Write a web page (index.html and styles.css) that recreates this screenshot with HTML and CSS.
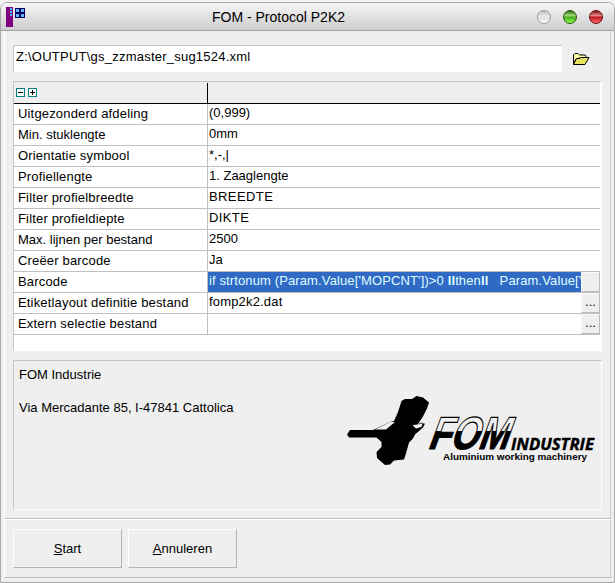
FILE: index.html
```html
<!DOCTYPE html>
<html lang="nl">
<head>
<meta charset="utf-8">
<title>FOM - Protocol P2K2</title>
<link rel="stylesheet" href="styles.css">
</head>
<body>
<div class="window">
  <header class="titlebar">
    <svg class="app-icon" width="20" height="21" viewBox="0 0 20 21" shape-rendering="crispEdges"><path fill="#800080" d="M0 0h7v20H0z"/><path fill="#4ac4ff" d="M4 1h2v2H4zm0 3h2v2H4zm0 3h2v2H4z"/><path fill="#000060" d="M9 1h10v10H9z"/><path fill="#64b9f4" d="M10 2h3v3h-3zm5 0h3v3h-3zm-5 5h3v3h-3zm5 0h3v3h-3z"/></svg>
    <h1>FOM - Protocol P2K2</h1>
    <div class="orbs"><i class="orb gray"></i><i class="orb green"></i><i class="orb red"></i></div>
  </header>
  <main>
    <div class="file-row">
      <div class="file-field">Z:\OUTPUT\gs_zzmaster_sug1524.xml</div>
      <svg class="folder" width="18" height="13" viewBox="0 0 18 13"><path d="M1.500 11.500V2L3 .5h3L7.500 2h5.500L14 3v2H7L3.500 6.500 1.500 11.500z" fill="#ffffa0" stroke="#000"/><path d="M1.500 11.500 4.500 5.500H8l1-1h8l-4 7z" fill="#e9e060" stroke="#000"/></svg>
    </div>
    <section class="grid">
      <div class="grid-head">
        <div class="label"><svg width="22" height="9" viewBox="0 0 22 9" shape-rendering="crispEdges"><path fill="#fff" stroke="#008080" d="M.5.5h8v8h-8zM12.500.5h8v8h-8z"/><path stroke="#000" d="M2 4.500h5M14 4.500h5M16.500 2v5"/></svg></div>
        <div class="value"></div>
      </div>
      <div class="row"><div class="label wide">Uitgezonderd afdeling</div><div class="value">(0,999)</div></div>
      <div class="row"><div class="label">Min. stuklengte</div><div class="value">0mm</div></div>
      <div class="row"><div class="label wide">Orientatie symbool</div><div class="value">*,-,|</div></div>
      <div class="row"><div class="label wide">Profiellengte</div><div class="value">1. Zaaglengte</div></div>
      <div class="row"><div class="label wide">Filter profielbreedte</div><div class="value caps">BREEDTE</div></div>
      <div class="row"><div class="label wide">Filter profieldiepte</div><div class="value caps">DIKTE</div></div>
      <div class="row"><div class="label">Max. lijnen per bestand</div><div class="value">2500</div></div>
      <div class="row"><div class="label wide">Creëer barcode</div><div class="value">Ja</div></div>
      <div class="row"><div class="label wide">Barcode</div><div class="value selected">if strtonum (Param.Value['MOPCNT'])&gt;0 <b>ll</b>then<b>ll</b>   Param.Value['</div><div class="more"></div></div>
      <div class="row"><div class="label wide">Etiketlayout definitie bestand</div><div class="value wide">fomp2k2.dat</div><div class="more">...</div></div>
      <div class="row"><div class="label wide">Extern selectie bestand</div><div class="value"></div><div class="more">...</div></div>
    </section>
    <section class="panel">
      <div class="address"><p>FOM Industrie</p><p>Via Mercadante 85, I-47841 Cattolica</p></div>
      <svg class="logo" width="250" height="74" viewBox="345 393 250 74">
        <defs><linearGradient id="split" x1="0" y1="416" x2="0" y2="450" gradientUnits="userSpaceOnUse"><stop offset="0" stop-color="#f0f0f0"/><stop offset=".45" stop-color="#f0f0f0"/><stop offset=".45"/><stop offset="1"/></linearGradient></defs>
        <path d="M401.500 401 405 399l7 0 4.500-3 6.500 1.500 6 5-2 6-4 8-4 6-2 2 8-1-2 4-8 7-2 4-4 4-3 11-2 6-10 1-4 4-5 .500-8-7-.500-6 5-5v-5l-5-4.500H349l-2-3 3-4.500h23l17-8 4-1 4-9z"/>
        <path d="M375 429.500l15-7.500h5l-9 7.500z" fill="#f0f0f0"/><path d="M412 425l11-2-1 4-6 2z" fill="#f0f0f0" stroke="#000" stroke-width=".7"/>
        <g transform="translate(428 449.500) skewX(-20) translate(-428 -449.500)">
          <text class="fom" x="427" y="449.500" textLength="80" lengthAdjust="spacingAndGlyphs" fill="url(#split)" stroke="#000" stroke-width="1.200">FOM</text>
        </g>
        <text class="industrie" x="511" y="449.500" textLength="83" lengthAdjust="spacingAndGlyphs">INDUSTRIE</text>
        <text class="tagline" x="443" y="460" textLength="144" lengthAdjust="spacingAndGlyphs">Aluminium working machinery</text>
      </svg>
    </section>
  </main>
  <footer><button><u>S</u>tart</button><button><u>A</u>nnuleren</button></footer>
</div>
</body>
</html>
```
FILE: styles.css
```css
* { box-sizing: border-box; }
body { margin: 0; width: 615px; height: 583px; overflow: hidden; background: #f3f3f3; color: #000; font: 13px/16px "Liberation Sans", Arial, sans-serif; }
.window { height: 581px; margin-top: 2px; border: 1px solid #a9a9a9; border-radius: 7px 7px 0 0; background: #efefef; display: flex; flex-direction: column; }
.titlebar { height: 28px; flex: none; border-bottom: 1px solid #a5a5a5; border-radius: 6px 6px 0 0; background: linear-gradient(#f7f7f7, #e3e3e3 45%, #cecece); display: grid; grid-template-columns: 80px 1fr 80px; }
.app-icon { margin: 4px 0 0 5px; }
.titlebar h1 { margin: 6px 0 0; padding-right: 58px; font-size: 14px; line-height: 16px; font-weight: normal; text-align: center; letter-spacing: 0; white-space: nowrap; }
.orbs { display: flex; gap: 12px; padding: 7px 0 0 3px; }
.orb { width: 14px; height: 14px; flex: none; border: 1px solid #999; border-radius: 50%; }
.gray { background: linear-gradient(#bbb, #eee 45%, #ddd 55%, #fff); }
.green { border-color: #205a0b; background: linear-gradient(#2d700f, #a7df7e 40%, #48a71f 50%, #8fff49); }
.red { border-color: #6b1018; background: linear-gradient(#79131b, #ef8c8d 40%, #bd1a24 50%, #ff6864); }
main { flex: none; height: 488px; margin: 0 3px; padding: 14px 9px 0 8px; border-left: 1px solid #fff; border-right: 1px solid #ccc; border-bottom: 1px solid #bdbdbd; }
.file-row { display: flex; align-items: center; height: 27px; }
.file-field { width: 549px; height: 27px; border-top: 1px solid #c5c5c5; border-left: 1px solid #c5c5c5; background: #fff; padding: 3px 2px; letter-spacing: .23px; }
.folder { margin: 2px 0 0 10px; }
.grid { width: 589px; height: 270px; margin-top: 9px; border: 1px solid #c5c5c5; border-right: 2px solid #fff; border-bottom: 0; background: #fff; }
.grid-head, .row { display: flex; }
.grid-head { height: 22px; border-bottom: 1px solid #000; background: #efefef; }
.grid-head .label { width: 193px; padding: 6px 0 0 2px; }
.grid-head .label svg { display: block; }
.grid-head .value { border-left: 1px solid #000; margin-top: 1px; }
.row { height: 21px; border-bottom: 1px solid #c0c0c0; white-space: pre; }
.label { width: 193px; flex: none; padding: 2px 0 0 4px; }
.value { flex: 1; min-width: 0; border-left: 1px solid #c0c0c0; padding: 1px 0 0 1px; overflow: hidden; }
.wide { letter-spacing: .17px; }
.caps { letter-spacing: .4px; }
.selected { background: #316ac5; color: #dfffff; letter-spacing: .12px; }
.more { width: 19px; flex: none; border: 1px solid; border-color: #f8f8f8 #bbb #bbb #f8f8f8; background: #efefef; text-align: center; }
.panel { width: 589px; height: 150px; margin-top: 9px; border: 1px solid; border-color: #c5c5c5 #fff #fff #c5c5c5; display: flex; }
.address { width: 331px; flex: none; padding: 6px 5px; white-space: nowrap; }
p { margin: 0 0 17px; }
.logo { margin-top: 32px; flex: none; }
.fom { font: bold 46px "Liberation Sans", sans-serif; }
.industrie { font: italic bold 16px "Open Sans", sans-serif; stroke: #000; stroke-width: .4px; }
.tagline { font: bold 9.5px "Liberation Sans", sans-serif; }
footer { margin: 0 3px; height: 59px; border: 1px solid #fff; border-right-color: #ccc; border-bottom-color: #bbb; display: flex; gap: 6px; padding: 9px 8px 0 8px; }
button { width: 109px; height: 39px; flex: none; padding: 0; background: #efefef; border: 1px solid; border-color: #fff #b4b4b4 #b4b4b4 #fff; font: inherit; color: #000; }
```
